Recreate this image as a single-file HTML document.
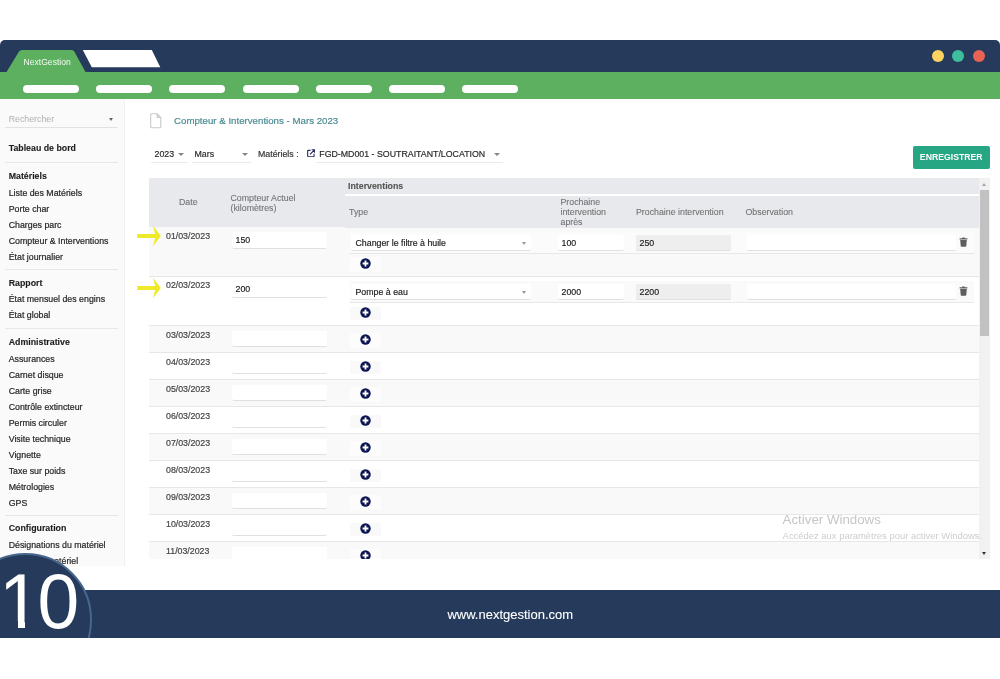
<!DOCTYPE html>
<html lang="fr"><head><meta charset="utf-8"><title>NextGestion</title>
<style>
*{box-sizing:border-box;margin:0;padding:0}
html,body{width:1000px;height:679px;overflow:hidden;background:#fff}
body{will-change:transform}
body{position:relative;font-family:"Liberation Sans", Arial, sans-serif;font-size:8.8px;color:#2a2a2a;-webkit-text-stroke:.18px currentColor}
.abs{position:absolute}
#navy{left:0;top:40px;width:1000px;height:32px;background:#263b5b;border-radius:5px 5px 0 0}
#green{left:0;top:71.5px;width:1000px;height:27.5px;background:#5db05f}
.pill{position:absolute;top:84.8px;height:8px;width:56px;border-radius:4px;background:#fff}
.dot{position:absolute;top:50px;width:12px;height:12px;border-radius:50%}
#tabtxt{-webkit-text-stroke:0;left:23.5px;top:57.3px;color:#f4faf4;font-size:8.6px;line-height:10px;white-space:nowrap}
#side{left:0;top:99px;width:125px;height:467px;background:#fafafa;border-right:1px solid #f0f0f0;overflow:hidden}
.si{position:absolute;left:8.7px;white-space:nowrap;line-height:10px;height:10px;color:#262626;font-size:8.8px;-webkit-text-stroke:.2px currentColor}
.sh{font-weight:bold;color:#1c1c1c;-webkit-text-stroke:.1px currentColor}
.sd{position:absolute;left:5px;width:113px;height:1px;background:#e7e7e7}
#title{left:174px;top:115px;font-size:9.7px;line-height:11px;color:#4b8b93;white-space:nowrap}
.sel{position:absolute;border-bottom:1px solid #eaeaea;white-space:nowrap;line-height:10px}
.car{position:absolute;width:0;height:0;margin-left:-.5px;border-left:3.2px solid transparent;border-right:3.2px solid transparent;border-top:3.4px solid #858585}
#btn{-webkit-text-stroke:0;left:912.5px;top:146px;width:77.5px;height:23px;background:#26a682;border-radius:2px;color:#fff;font-weight:bold;font-size:8.7px;line-height:23px;text-align:center;white-space:nowrap}
#tbl{left:149px;top:178px;width:830px;height:381px;overflow:hidden}
#thead{left:0;top:0;width:830px;height:49px;background:#e8e9ed}
#thead2{left:196px;top:49px;width:634px;height:1.4px;background:#e8e9ed}
.th{position:absolute;color:#737373;-webkit-text-stroke:.1px currentColor;line-height:10.2px;white-space:nowrap;font-size:8.8px}
.row{position:absolute;left:0;width:830px}
.ln{position:absolute;left:0;top:0;width:830px;height:1px;background:#e7e7e7}
.odd{background:#f9f9f9}
.even{background:#fff}
.date{position:absolute;left:17px;top:4.5px;line-height:10px;color:#444;white-space:nowrap}
.inp{position:absolute;height:16.5px;background:#fff;border-bottom:1px solid #e0e0e0;border-radius:2px;line-height:16px;padding-left:3.5px;color:#222;white-space:nowrap}
.inp.ro{background:#eee}
.plusbox{position:absolute;left:201.2px;width:30.8px;height:14.6px;background:#fcfcfc}
.even .plusbox{background:#f9f9f9;height:12.8px;margin-top:1.1px}
.inner{position:absolute;left:201px;width:624.3px;height:22px;border-bottom:1px solid #e8e8e8;background:rgba(255,255,255,.3)}
.even .inner{background:#fafafa}
#sb{left:979px;top:178px;width:11px;height:381px;background:#f1f1f1}
#thumb{left:980.2px;top:189.5px;width:8.6px;height:146px;background:#c1c1c1}
#bar{left:0;top:590.3px;width:1000px;height:48px;background:#263b5b;overflow:hidden}
#url{-webkit-text-stroke:.1px currentColor;left:0;width:1020.6px;top:607.1px;text-align:center;color:#fff;font-size:13px;line-height:15px}
#circwrap{left:0;top:540px;width:120px;height:98.3px;overflow:hidden}
#circ{position:absolute;left:-41.4px;top:13.3px;width:133.8px;height:133.8px;border-radius:50%;background:#263b5b;border:2.8px solid #48678f}
#ten{-webkit-text-stroke:0;left:-1px;top:556.9px;font-size:75px;line-height:84px;color:#fff;white-space:nowrap;transform:scaleY(1.045);transform-origin:0 0}
#ten span{letter-spacing:-3.2px}
.ftm{position:absolute;top:620.6px;height:9px;background:#263b5b}
#aw1{-webkit-text-stroke:0;left:782.6px;top:512.4px;font-size:13.3px;line-height:16px;color:#c6c6c6;white-space:nowrap}
#aw2{-webkit-text-stroke:0;left:782.6px;top:529.9px;font-size:9.43px;line-height:12px;color:#cdcdcd;white-space:nowrap}
</style></head>
<body>
<div class="abs" id="navy"></div>
<div class="abs" id="green"></div>
<svg class="abs" style="left:0;top:40px" width="200" height="33" viewBox="0 40 200 33">
<path d="M6.5 72 L19 51.5 Q20 50 22 50 L71.5 50 Q73.5 50 74.3 51.5 L85.5 72 Z" fill="#5db05f"/>
<path d="M82.8 50 L151.8 50 L160.3 67.3 L91.8 67.3 Z" fill="#fff"/>
</svg>
<div class="abs" id="tabtxt">NextGestion</div>
<div class="pill" style="left:23.0px"></div>
<div class="pill" style="left:96.2px"></div>
<div class="pill" style="left:169.4px"></div>
<div class="pill" style="left:242.6px"></div>
<div class="pill" style="left:315.8px"></div>
<div class="pill" style="left:389.0px"></div>
<div class="pill" style="left:462.2px"></div>
<div class="dot" style="left:932px;background:#fdd45f"></div>
<div class="dot" style="left:952px;background:#3cbf9d"></div>
<div class="dot" style="left:972.7px;background:#ea6254"></div>
<div class="abs" id="side"><div class="si" style="top:14.6px;color:#b0b0b0;-webkit-text-stroke:0">Rechercher</div><div class="car" style="left:109px;top:18.5px;border-width:3px 2.6px 0 2.6px;border-top-color:#666"></div><div class="sd" style="top:28px;background:#e2e2e2"></div><div class="si sh" style="top:44.2px">Tableau de bord</div><div class="sd" style="top:63.0px"></div><div class="si sh" style="top:71.6px">Matériels</div><div class="si" style="top:88.6px">Liste des Matériels</div><div class="si" style="top:104.6px">Porte char</div><div class="si" style="top:120.6px">Charges parc</div><div class="si" style="top:136.6px">Compteur &amp; Interventions</div><div class="si" style="top:152.6px">État journalier</div><div class="sd" style="top:170.0px"></div><div class="si sh" style="top:178.5px">Rapport</div><div class="si" style="top:195.4px">État mensuel des engins</div><div class="si" style="top:211.4px">État global</div><div class="sd" style="top:229.3px"></div><div class="si sh" style="top:237.5px">Administrative</div><div class="si" style="top:254.5px">Assurances</div><div class="si" style="top:270.5px">Carnet disque</div><div class="si" style="top:286.5px">Carte grise</div><div class="si" style="top:302.5px">Contrôle extincteur</div><div class="si" style="top:318.5px">Permis circuler</div><div class="si" style="top:334.5px">Visite technique</div><div class="si" style="top:350.5px">Vignette</div><div class="si" style="top:366.5px">Taxe sur poids</div><div class="si" style="top:382.5px">Métrologies</div><div class="si" style="top:398.5px">GPS</div><div class="sd" style="top:416.0px"></div><div class="si sh" style="top:424.2px">Configuration</div><div class="si" style="top:441.3px">Désignations du matériel</div><div class="si" style="top:457.3px">Types du matériel</div></div>
<svg class="abs" style="left:149.5px;top:113px" width="12" height="16" viewBox="0 0 12 16"><path d="M1.5 0.8 H7.2 L10.8 4.4 V14 Q10.8 14.8 10 14.8 H1.5 Q0.7 14.8 0.7 14 V1.6 Q0.7 0.8 1.5 0.8 Z M7.2 0.8 V4.4 H10.8" fill="none" stroke="#c9c9c9" stroke-width="1.1"/></svg>
<div class="abs" id="title">Compteur &amp; Interventions - Mars 2023</div>
<div class="sel" style="left:151px;top:145px;width:36.5px;height:17.5px;padding:3.5px 0 0 3.5px">2023</div>
<div class="car" style="left:178.5px;top:152.5px"></div>
<div class="sel" style="left:191.5px;top:145px;width:59.5px;height:17.5px;padding:3.5px 0 0 3px">Mars</div>
<div class="car" style="left:242.5px;top:152.5px"></div>
<div class="abs" style="left:258px;top:148.5px;line-height:10px;white-space:nowrap;color:#333">Matériels :</div>
<svg class="abs" style="left:306.8px;top:148.8px" width="8.4" height="8.4" viewBox="0 0 10 10"><path d="M4.2 1.6 H1.6 Q0.8 1.6 0.8 2.4 V8.4 Q0.8 9.2 1.6 9.2 H7.6 Q8.4 9.2 8.4 8.4 V5.8" fill="none" stroke="#262a5e" stroke-width="1.3"/><path d="M3.6 6.4 L8.6 1.4 M5.6 0.9 H9.1 V4.4" fill="none" stroke="#262a5e" stroke-width="1.4"/></svg>
<div class="sel" style="left:316px;top:145px;width:187px;height:17.5px;padding:3.5px 0 0 3.3px">FGD-MD001 - SOUTRAITANT/LOCATION</div>
<div class="car" style="left:494px;top:152.5px"></div>
<div class="abs" id="btn">ENREGISTRER</div>
<div class="abs" id="tbl"><div class="abs" id="thead"><div class="th" style="left:30px;top:19.3px">Date</div><div class="th" style="left:81.5px;top:14.8px">Compteur Actuel<br>(kilomètres)</div><div class="th" style="left:199px;top:3px;font-weight:bold;color:#555">Interventions</div><div class="abs" style="left:196px;top:15.8px;width:634px;height:2.2px;background:#fff"></div><div class="th" style="left:200px;top:28.7px">Type</div><div class="th" style="left:411.5px;top:18.7px">Prochaine<br>intervention<br>après</div><div class="th" style="left:487px;top:28.7px">Prochaine intervention</div><div class="th" style="left:596.5px;top:28.7px">Observation</div></div><div class="row odd" style="top:49px;height:49px"><div class="date" style="top:4.2px">01/03/2023</div><div class="inp" style="left:83px;top:5px;width:95px">150</div><div class="inner" style="top:5px"></div><div class="inp" style="left:202px;top:7.5px;width:180px;padding-left:4.5px">Changer le filtre à huile</div><div class="car" style="left:373px;top:14.5px;border-width:3px 2.5px 0 2.5px;border-top-color:#999"></div><div class="inp" style="left:409px;top:7.5px;width:66px">100</div><div class="inp ro" style="left:487px;top:7.5px;width:94.5px">250</div><div class="inp" style="left:598px;top:7.5px;width:208.5px"></div><svg style="position:absolute;left:809.7px;top:10.0px" width="9" height="10" viewBox="0 0 9 10"><path d="M0.6 1.2 H3 L3.4 0.4 H5.6 L6 1.2 H8.4 V2.4 H0.6 Z M1.2 3 H7.8 L7.3 9 Q7.25 9.7 6.5 9.7 H2.5 Q1.75 9.7 1.7 9 Z" fill="#5e5e5e"/></svg><div class="plusbox" style="top:30px"></div><svg style="position:absolute;left:211.2px;top:31px" width="11" height="11" viewBox="0 0 11 11"><circle cx="5.5" cy="5.5" r="5.2" fill="#0c1552"/><path d="M5.5 2.6 V8.4 M2.6 5.5 H8.4" stroke="#fff" stroke-width="1.8"/></svg></div><div class="row even" style="top:98px;height:49px"><div class="ln"></div><div class="date" style="top:4.2px">02/03/2023</div><div class="inp" style="left:83px;top:5px;width:95px">200</div><div class="inner" style="top:5px"></div><div class="inp" style="left:202px;top:7.5px;width:180px;padding-left:4.5px">Pompe à eau</div><div class="car" style="left:373px;top:14.5px;border-width:3px 2.5px 0 2.5px;border-top-color:#999"></div><div class="inp" style="left:409px;top:7.5px;width:66px">2000</div><div class="inp ro" style="left:487px;top:7.5px;width:94.5px">2200</div><div class="inp" style="left:598px;top:7.5px;width:208.5px"></div><svg style="position:absolute;left:809.7px;top:10.0px" width="9" height="10" viewBox="0 0 9 10"><path d="M0.6 1.2 H3 L3.4 0.4 H5.6 L6 1.2 H8.4 V2.4 H0.6 Z M1.2 3 H7.8 L7.3 9 Q7.25 9.7 6.5 9.7 H2.5 Q1.75 9.7 1.7 9 Z" fill="#5e5e5e"/></svg><div class="plusbox" style="top:30px"></div><svg style="position:absolute;left:211.2px;top:31px" width="11" height="11" viewBox="0 0 11 11"><circle cx="5.5" cy="5.5" r="5.2" fill="#0c1552"/><path d="M5.5 2.6 V8.4 M2.6 5.5 H8.4" stroke="#fff" stroke-width="1.8"/></svg></div><div class="row odd" style="top:147px;height:27px"><div class="ln"></div><div class="date">03/03/2023</div><div class="inp" style="left:83px;top:5.5px;width:95px"></div><div class="plusbox" style="top:8.1px"></div><svg style="position:absolute;left:211.2px;top:9.2px" width="11" height="11" viewBox="0 0 11 11"><circle cx="5.5" cy="5.5" r="5.2" fill="#0c1552"/><path d="M5.5 2.6 V8.4 M2.6 5.5 H8.4" stroke="#fff" stroke-width="1.8"/></svg></div><div class="row even" style="top:174px;height:27px"><div class="ln"></div><div class="date">04/03/2023</div><div class="inp" style="left:83px;top:5.5px;width:95px"></div><div class="plusbox" style="top:8.1px"></div><svg style="position:absolute;left:211.2px;top:9.2px" width="11" height="11" viewBox="0 0 11 11"><circle cx="5.5" cy="5.5" r="5.2" fill="#0c1552"/><path d="M5.5 2.6 V8.4 M2.6 5.5 H8.4" stroke="#fff" stroke-width="1.8"/></svg></div><div class="row odd" style="top:201px;height:27px"><div class="ln"></div><div class="date">05/03/2023</div><div class="inp" style="left:83px;top:5.5px;width:95px"></div><div class="plusbox" style="top:8.1px"></div><svg style="position:absolute;left:211.2px;top:9.2px" width="11" height="11" viewBox="0 0 11 11"><circle cx="5.5" cy="5.5" r="5.2" fill="#0c1552"/><path d="M5.5 2.6 V8.4 M2.6 5.5 H8.4" stroke="#fff" stroke-width="1.8"/></svg></div><div class="row even" style="top:228px;height:27px"><div class="ln"></div><div class="date">06/03/2023</div><div class="inp" style="left:83px;top:5.5px;width:95px"></div><div class="plusbox" style="top:8.1px"></div><svg style="position:absolute;left:211.2px;top:9.2px" width="11" height="11" viewBox="0 0 11 11"><circle cx="5.5" cy="5.5" r="5.2" fill="#0c1552"/><path d="M5.5 2.6 V8.4 M2.6 5.5 H8.4" stroke="#fff" stroke-width="1.8"/></svg></div><div class="row odd" style="top:255px;height:27px"><div class="ln"></div><div class="date">07/03/2023</div><div class="inp" style="left:83px;top:5.5px;width:95px"></div><div class="plusbox" style="top:8.1px"></div><svg style="position:absolute;left:211.2px;top:9.2px" width="11" height="11" viewBox="0 0 11 11"><circle cx="5.5" cy="5.5" r="5.2" fill="#0c1552"/><path d="M5.5 2.6 V8.4 M2.6 5.5 H8.4" stroke="#fff" stroke-width="1.8"/></svg></div><div class="row even" style="top:282px;height:27px"><div class="ln"></div><div class="date">08/03/2023</div><div class="inp" style="left:83px;top:5.5px;width:95px"></div><div class="plusbox" style="top:8.1px"></div><svg style="position:absolute;left:211.2px;top:9.2px" width="11" height="11" viewBox="0 0 11 11"><circle cx="5.5" cy="5.5" r="5.2" fill="#0c1552"/><path d="M5.5 2.6 V8.4 M2.6 5.5 H8.4" stroke="#fff" stroke-width="1.8"/></svg></div><div class="row odd" style="top:309px;height:27px"><div class="ln"></div><div class="date">09/03/2023</div><div class="inp" style="left:83px;top:5.5px;width:95px"></div><div class="plusbox" style="top:8.1px"></div><svg style="position:absolute;left:211.2px;top:9.2px" width="11" height="11" viewBox="0 0 11 11"><circle cx="5.5" cy="5.5" r="5.2" fill="#0c1552"/><path d="M5.5 2.6 V8.4 M2.6 5.5 H8.4" stroke="#fff" stroke-width="1.8"/></svg></div><div class="row even" style="top:336px;height:27px"><div class="ln"></div><div class="date">10/03/2023</div><div class="inp" style="left:83px;top:5.5px;width:95px"></div><div class="plusbox" style="top:8.1px"></div><svg style="position:absolute;left:211.2px;top:9.2px" width="11" height="11" viewBox="0 0 11 11"><circle cx="5.5" cy="5.5" r="5.2" fill="#0c1552"/><path d="M5.5 2.6 V8.4 M2.6 5.5 H8.4" stroke="#fff" stroke-width="1.8"/></svg></div><div class="row odd" style="top:363px;height:27px"><div class="ln"></div><div class="date">11/03/2023</div><div class="inp" style="left:83px;top:5.5px;width:95px"></div><div class="plusbox" style="top:8.1px"></div><svg style="position:absolute;left:211.2px;top:9.2px" width="11" height="11" viewBox="0 0 11 11"><circle cx="5.5" cy="5.5" r="5.2" fill="#0c1552"/><path d="M5.5 2.6 V8.4 M2.6 5.5 H8.4" stroke="#fff" stroke-width="1.8"/></svg></div><div class="abs" id="thead2"></div></div>
<div class="abs" id="sb"></div><div class="abs" id="thumb"></div>
<div class="car" style="left:982.1px;top:182.7px;border-width:0 2.4px 3px 2.4px;border-top:none;border-bottom:3px solid #a3a3a3"></div>
<div class="car" style="left:982.1px;top:551.7px;border-width:3px 2.4px 0 2.4px;border-top-color:#333"></div>
<svg class="abs" style="left:136px;top:224.5px" width="26" height="22" viewBox="0 0 26 22"><path d="M1.2 8.9 H19.2 L16.8 0.6 L24.8 11 L16.8 21.4 L19.2 13.1 H1.2 Z" fill="#efea28"/></svg>
<svg class="abs" style="left:136px;top:276.6px" width="26" height="22" viewBox="0 0 26 22"><path d="M1.2 8.9 H19.2 L16.8 0.6 L24.8 11 L16.8 21.4 L19.2 13.1 H1.2 Z" fill="#efea28"/></svg>
<div class="abs" id="aw1">Activer Windows</div>
<div class="abs" id="aw2">Accédez aux paramètres pour activer Windows.</div>
<div class="abs" id="bar"></div>
<div class="abs" id="circwrap"><div id="circ"></div></div>
<div class="abs" id="ten"><span>1</span>0</div>
<div class="ftm" style="left:1.5px;width:16.5px"></div><div class="ftm" style="left:25px;width:13.5px"></div>
<div class="abs" id="url">www.nextgestion.com</div>
</body></html>
